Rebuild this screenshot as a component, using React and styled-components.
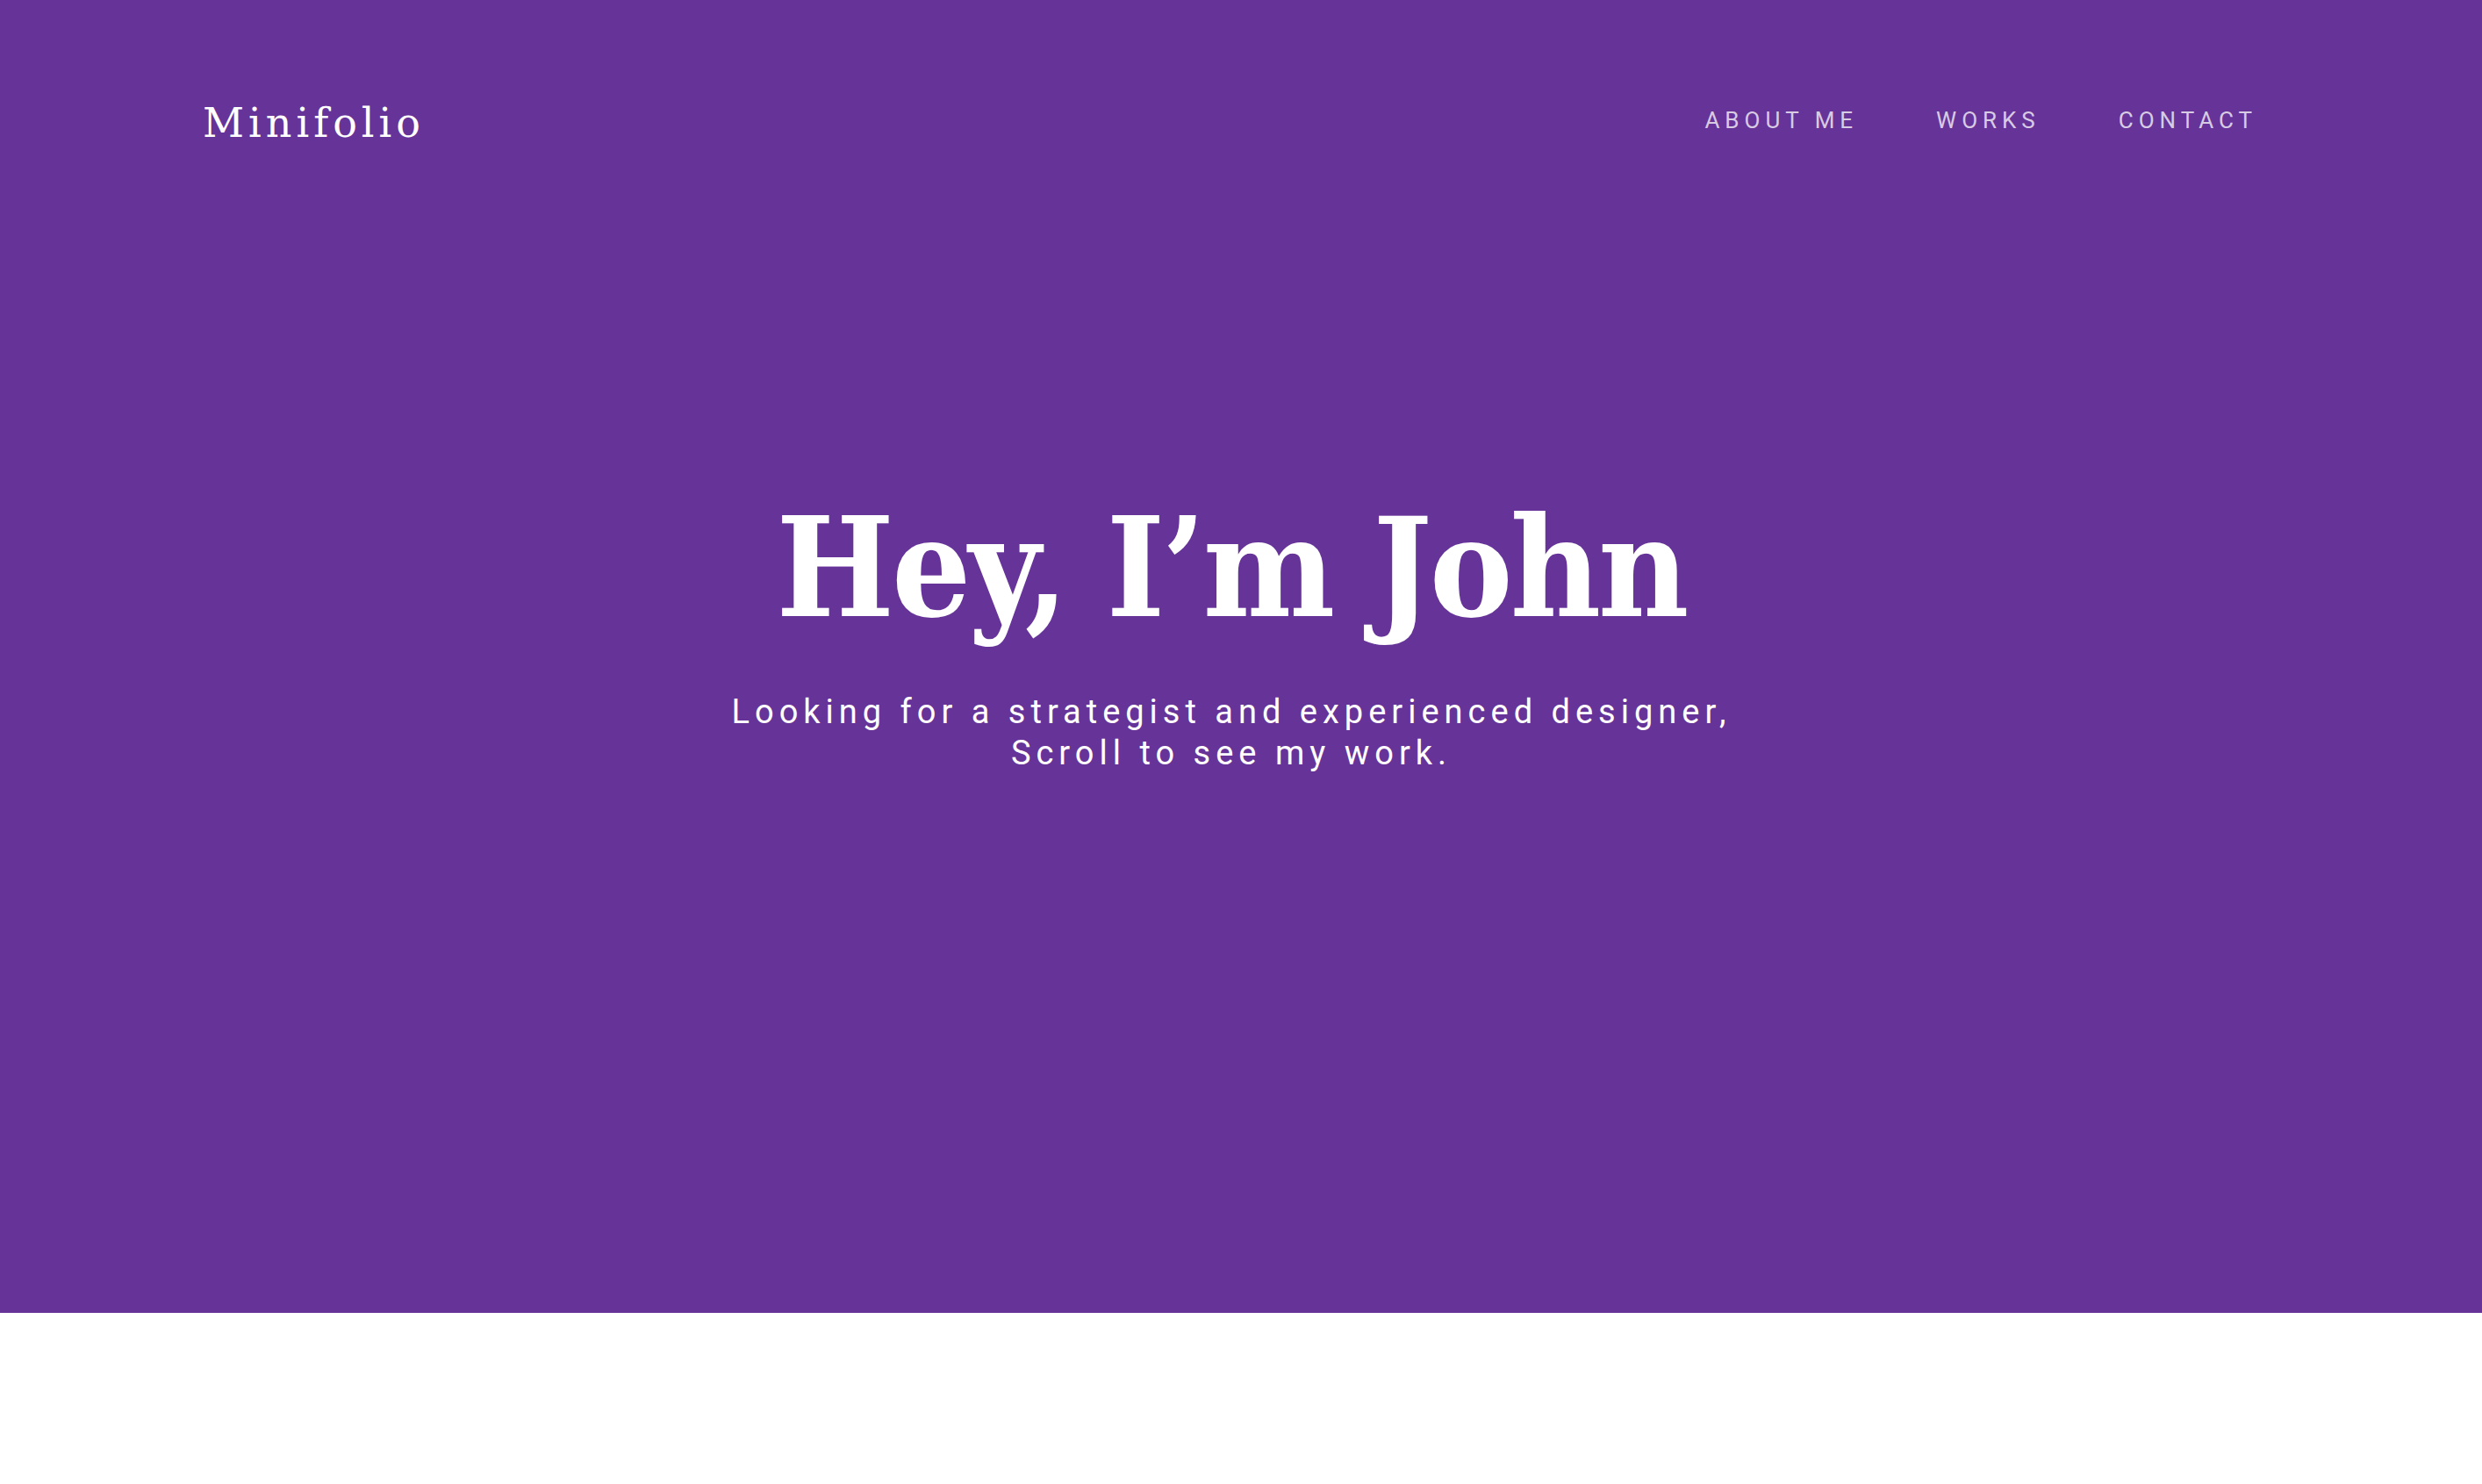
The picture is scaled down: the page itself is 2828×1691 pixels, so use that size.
import React from 'react'
import styled, { createGlobalStyle } from 'styled-components'

const GlobalStyle = createGlobalStyle`
  html, body {
    margin: 0;
    padding: 0;
    background: #ffffff;
  }
  * {
    box-sizing: border-box;
  }
`;

const Hero = styled.section`
  background: #663399;
  height: 1496px;
  display: flex;
  flex-direction: column;
`;

const Header = styled.header`
  display: flex;
  justify-content: space-between;
  align-items: flex-start;
  padding: 117px 256px 0 231px;
`;

const Logo = styled.a`
  font-family: "DejaVu Serif", "Liberation Serif", serif;
  font-size: 46px;
  letter-spacing: 5px;
  line-height: 1;
  color: #ffffff;
  text-decoration: none;
`;

const Nav = styled.nav`
  display: flex;
  gap: 89px;
  margin-top: 5px;
`;

const NavLink = styled.a`
  font-family: Roboto, "Liberation Sans", sans-serif;
  font-size: 26px;
  letter-spacing: 0.23em;
  text-transform: uppercase;
  color: rgba(255, 255, 255, 0.75);
  text-decoration: none;
  cursor: pointer;
`;

const Intro = styled.div`
  display: flex;
  flex-direction: column;
  align-items: center;
  text-align: center;
  padding: 405px 22px 0 0;
  color: #ffffff;
`;

const Title = styled.h1`
  font-family: "DejaVu Serif Condensed", "DejaVu Serif", serif;
  font-weight: 700;
  font-size: 158px;
  letter-spacing: -3px;
  line-height: 1;
  margin: 0;
`;

const Lead = styled.p`
  font-family: Roboto, "Liberation Sans", sans-serif;
  font-size: 38px;
  letter-spacing: 6px;
  line-height: 47px;
  margin: 62px 0 0;
`;

const App = () =>
{
  return (
    <>
      <GlobalStyle />
      <Hero>
        <Header>
          <Logo href='#'>Minifolio</Logo>
          <Nav>
            <NavLink>About me</NavLink>
            <NavLink>Works</NavLink>
            <NavLink>Contact</NavLink>
          </Nav>
        </Header>
        <Intro>
          <Title>Hey, I’m John</Title>
          <Lead>
            Looking for a strategist and experienced designer,
            <br />
            Scroll to see my work.
          </Lead>
        </Intro>
      </Hero>
    </>
  )
}

export default App
